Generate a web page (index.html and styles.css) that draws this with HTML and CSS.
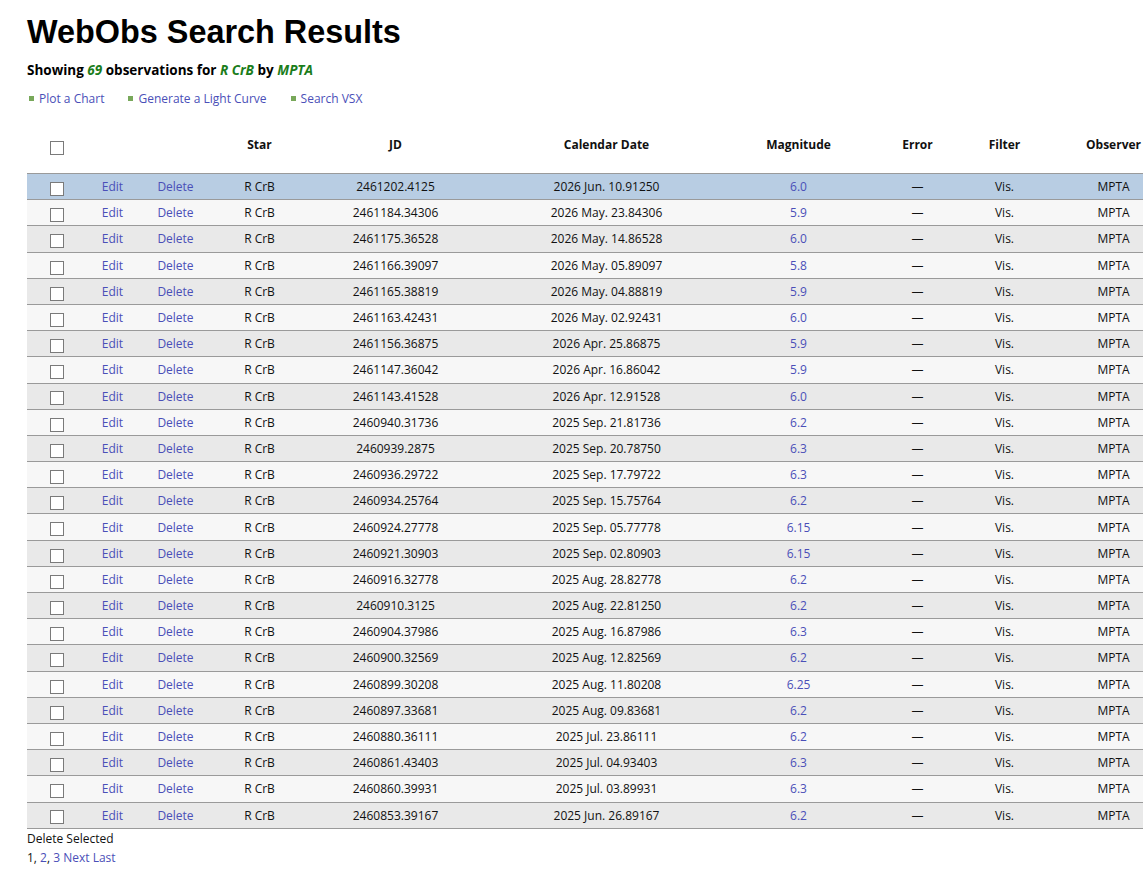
FILE: index.html
```html
<!DOCTYPE html>
<html>
<head>
<meta charset="utf-8">
<title>WebObs Search Results</title>
<link rel="stylesheet" href="styles.css">
</head>
<body>
<div class="page">
  <h1 class="title">WebObs Search Results</h1>
  <p class="summary">Showing <em>69</em> observations for <em>R CrB</em> by <em>MPTA</em></p>
  <ul class="actions">
    <li><a href="#">Plot a Chart</a></li>
    <li><a href="#">Generate a Light Curve</a></li>
    <li><a href="#">Search VSX</a></li>
  </ul>
  <table class="results">
    <colgroup>
      <col class="c-check"><col class="c-edit"><col class="c-del"><col class="c-star"><col class="c-jd"><col class="c-date"><col class="c-mag"><col class="c-err"><col class="c-filter"><col class="c-obs">
    </colgroup>
    <thead>
      <tr>
        <th><input type="checkbox" class="cb"></th>
        <th></th><th></th>
        <th>Star</th><th>JD</th><th>Calendar Date</th><th>Magnitude</th><th>Error</th><th>Filter</th><th>Observer</th>
      </tr>
    </thead>
    <tbody id="rows">
      <tr class="sel"><td><input type="checkbox" class="cb"></td><td><a href="#">Edit</a></td><td><a href="#">Delete</a></td><td>R CrB</td><td>2461202.4125</td><td>2026 Jun. 10.91250</td><td><a href="#">6.0</a></td><td>—</td><td>Vis.</td><td>MPTA</td></tr>
      <tr><td><input type="checkbox" class="cb"></td><td><a href="#">Edit</a></td><td><a href="#">Delete</a></td><td>R CrB</td><td>2461184.34306</td><td>2026 May. 23.84306</td><td><a href="#">5.9</a></td><td>—</td><td>Vis.</td><td>MPTA</td></tr>
      <tr><td><input type="checkbox" class="cb"></td><td><a href="#">Edit</a></td><td><a href="#">Delete</a></td><td>R CrB</td><td>2461175.36528</td><td>2026 May. 14.86528</td><td><a href="#">6.0</a></td><td>—</td><td>Vis.</td><td>MPTA</td></tr>
      <tr><td><input type="checkbox" class="cb"></td><td><a href="#">Edit</a></td><td><a href="#">Delete</a></td><td>R CrB</td><td>2461166.39097</td><td>2026 May. 05.89097</td><td><a href="#">5.8</a></td><td>—</td><td>Vis.</td><td>MPTA</td></tr>
      <tr><td><input type="checkbox" class="cb"></td><td><a href="#">Edit</a></td><td><a href="#">Delete</a></td><td>R CrB</td><td>2461165.38819</td><td>2026 May. 04.88819</td><td><a href="#">5.9</a></td><td>—</td><td>Vis.</td><td>MPTA</td></tr>
      <tr><td><input type="checkbox" class="cb"></td><td><a href="#">Edit</a></td><td><a href="#">Delete</a></td><td>R CrB</td><td>2461163.42431</td><td>2026 May. 02.92431</td><td><a href="#">6.0</a></td><td>—</td><td>Vis.</td><td>MPTA</td></tr>
      <tr><td><input type="checkbox" class="cb"></td><td><a href="#">Edit</a></td><td><a href="#">Delete</a></td><td>R CrB</td><td>2461156.36875</td><td>2026 Apr. 25.86875</td><td><a href="#">5.9</a></td><td>—</td><td>Vis.</td><td>MPTA</td></tr>
      <tr><td><input type="checkbox" class="cb"></td><td><a href="#">Edit</a></td><td><a href="#">Delete</a></td><td>R CrB</td><td>2461147.36042</td><td>2026 Apr. 16.86042</td><td><a href="#">5.9</a></td><td>—</td><td>Vis.</td><td>MPTA</td></tr>
      <tr><td><input type="checkbox" class="cb"></td><td><a href="#">Edit</a></td><td><a href="#">Delete</a></td><td>R CrB</td><td>2461143.41528</td><td>2026 Apr. 12.91528</td><td><a href="#">6.0</a></td><td>—</td><td>Vis.</td><td>MPTA</td></tr>
      <tr><td><input type="checkbox" class="cb"></td><td><a href="#">Edit</a></td><td><a href="#">Delete</a></td><td>R CrB</td><td>2460940.31736</td><td>2025 Sep. 21.81736</td><td><a href="#">6.2</a></td><td>—</td><td>Vis.</td><td>MPTA</td></tr>
      <tr><td><input type="checkbox" class="cb"></td><td><a href="#">Edit</a></td><td><a href="#">Delete</a></td><td>R CrB</td><td>2460939.2875</td><td>2025 Sep. 20.78750</td><td><a href="#">6.3</a></td><td>—</td><td>Vis.</td><td>MPTA</td></tr>
      <tr><td><input type="checkbox" class="cb"></td><td><a href="#">Edit</a></td><td><a href="#">Delete</a></td><td>R CrB</td><td>2460936.29722</td><td>2025 Sep. 17.79722</td><td><a href="#">6.3</a></td><td>—</td><td>Vis.</td><td>MPTA</td></tr>
      <tr><td><input type="checkbox" class="cb"></td><td><a href="#">Edit</a></td><td><a href="#">Delete</a></td><td>R CrB</td><td>2460934.25764</td><td>2025 Sep. 15.75764</td><td><a href="#">6.2</a></td><td>—</td><td>Vis.</td><td>MPTA</td></tr>
      <tr><td><input type="checkbox" class="cb"></td><td><a href="#">Edit</a></td><td><a href="#">Delete</a></td><td>R CrB</td><td>2460924.27778</td><td>2025 Sep. 05.77778</td><td><a href="#">6.15</a></td><td>—</td><td>Vis.</td><td>MPTA</td></tr>
      <tr><td><input type="checkbox" class="cb"></td><td><a href="#">Edit</a></td><td><a href="#">Delete</a></td><td>R CrB</td><td>2460921.30903</td><td>2025 Sep. 02.80903</td><td><a href="#">6.15</a></td><td>—</td><td>Vis.</td><td>MPTA</td></tr>
      <tr><td><input type="checkbox" class="cb"></td><td><a href="#">Edit</a></td><td><a href="#">Delete</a></td><td>R CrB</td><td>2460916.32778</td><td>2025 Aug. 28.82778</td><td><a href="#">6.2</a></td><td>—</td><td>Vis.</td><td>MPTA</td></tr>
      <tr><td><input type="checkbox" class="cb"></td><td><a href="#">Edit</a></td><td><a href="#">Delete</a></td><td>R CrB</td><td>2460910.3125</td><td>2025 Aug. 22.81250</td><td><a href="#">6.2</a></td><td>—</td><td>Vis.</td><td>MPTA</td></tr>
      <tr><td><input type="checkbox" class="cb"></td><td><a href="#">Edit</a></td><td><a href="#">Delete</a></td><td>R CrB</td><td>2460904.37986</td><td>2025 Aug. 16.87986</td><td><a href="#">6.3</a></td><td>—</td><td>Vis.</td><td>MPTA</td></tr>
      <tr><td><input type="checkbox" class="cb"></td><td><a href="#">Edit</a></td><td><a href="#">Delete</a></td><td>R CrB</td><td>2460900.32569</td><td>2025 Aug. 12.82569</td><td><a href="#">6.2</a></td><td>—</td><td>Vis.</td><td>MPTA</td></tr>
      <tr><td><input type="checkbox" class="cb"></td><td><a href="#">Edit</a></td><td><a href="#">Delete</a></td><td>R CrB</td><td>2460899.30208</td><td>2025 Aug. 11.80208</td><td><a href="#">6.25</a></td><td>—</td><td>Vis.</td><td>MPTA</td></tr>
      <tr><td><input type="checkbox" class="cb"></td><td><a href="#">Edit</a></td><td><a href="#">Delete</a></td><td>R CrB</td><td>2460897.33681</td><td>2025 Aug. 09.83681</td><td><a href="#">6.2</a></td><td>—</td><td>Vis.</td><td>MPTA</td></tr>
      <tr><td><input type="checkbox" class="cb"></td><td><a href="#">Edit</a></td><td><a href="#">Delete</a></td><td>R CrB</td><td>2460880.36111</td><td>2025 Jul. 23.86111</td><td><a href="#">6.2</a></td><td>—</td><td>Vis.</td><td>MPTA</td></tr>
      <tr><td><input type="checkbox" class="cb"></td><td><a href="#">Edit</a></td><td><a href="#">Delete</a></td><td>R CrB</td><td>2460861.43403</td><td>2025 Jul. 04.93403</td><td><a href="#">6.3</a></td><td>—</td><td>Vis.</td><td>MPTA</td></tr>
      <tr><td><input type="checkbox" class="cb"></td><td><a href="#">Edit</a></td><td><a href="#">Delete</a></td><td>R CrB</td><td>2460860.39931</td><td>2025 Jul. 03.89931</td><td><a href="#">6.3</a></td><td>—</td><td>Vis.</td><td>MPTA</td></tr>
      <tr><td><input type="checkbox" class="cb"></td><td><a href="#">Edit</a></td><td><a href="#">Delete</a></td><td>R CrB</td><td>2460853.39167</td><td>2025 Jun. 26.89167</td><td><a href="#">6.2</a></td><td>—</td><td>Vis.</td><td>MPTA</td></tr>
    </tbody>
  </table>
  <div class="footer">
    <div class="delete-selected">Delete Selected</div>
    <div class="pager">1, <a href="#">2</a>, <a href="#">3</a> <a href="#">Next</a> <a href="#">Last</a></div>
  </div>
</div>
</body>
</html>
```

FILE: styles.css
```css
html, body {
  margin: 0;
  padding: 0;
  background: #ffffff;
  overflow-x: hidden;
}
body {
  font-family: "Open Sans", "Noto Sans", sans-serif;
  font-size: 12px;
  color: #111111;
}
a {
  color: #4a4fb8;
  text-decoration: none;
}
.page {
  padding: 0 0 0 27px;
}
.title {
  font-family: "Liberation Sans", Arial, sans-serif;
  font-weight: bold;
  font-size: 32.4px;
  line-height: 37px;
  margin: 14px 0 0 0;
  color: #000000;
}
.summary {
  margin: 10px 0 0 0;
  font-weight: bold;
  font-size: 13.5px;
  line-height: 18px;
  color: #000;
}
.summary em {
  color: #1b7d1b;
  font-style: italic;
}
.actions {
  list-style: none;
  margin: 11px 0 0 0;
  padding: 0;
  display: flex;
  gap: 22px;
  line-height: 17px;
}
.actions li {
  display: flex;
  align-items: center;
  gap: 5px;
}
.actions li::before {
  content: "";
  width: 5px;
  height: 5px;
  background: #78a85a;
  margin-left: 2px;
}
.results {
  margin-top: 16px;
  border-collapse: collapse;
  table-layout: fixed;
  width: 1158px;
}
.c-check { width: 58px; }
.c-edit { width: 54px; }
.c-del { width: 72px; }
.c-star { width: 96px; }
.c-jd { width: 176px; }
.c-date { width: 246px; }
.c-mag { width: 138px; }
.c-err { width: 100px; }
.c-filter { width: 74px; }
.c-obs { width: 144px; }
.results th {
  height: 42px;
  font-weight: bold;
  text-align: center;
  padding: 0 0 8px 1px;
  vertical-align: middle;
  border-bottom: 1px solid #9a9a9a;
}
.results th:first-child {
  padding-bottom: 4px;
}
.results td {
  height: 25.2px;
  padding: 0 0 0 1px;
  text-align: center;
  vertical-align: middle;
  border-bottom: 1px solid #9a9a9a;
  white-space: nowrap;
}
.results tbody tr:nth-child(odd) { background: #e9e9e9; }
.results tbody tr:nth-child(even) { background: #f7f7f7; }
.results tbody tr.sel { background: #b8cde3; }
.cb {
  appearance: none;
  -webkit-appearance: none;
  width: 14px;
  height: 14px;
  margin: 4px 0 0 0;
  border: 1px solid #7a7a7a;
  background: #ffffff;
  vertical-align: middle;
}
.footer {
  line-height: 19px;
  font-size: 12px;
}
.delete-selected {
  margin-top: 0;
}
```
